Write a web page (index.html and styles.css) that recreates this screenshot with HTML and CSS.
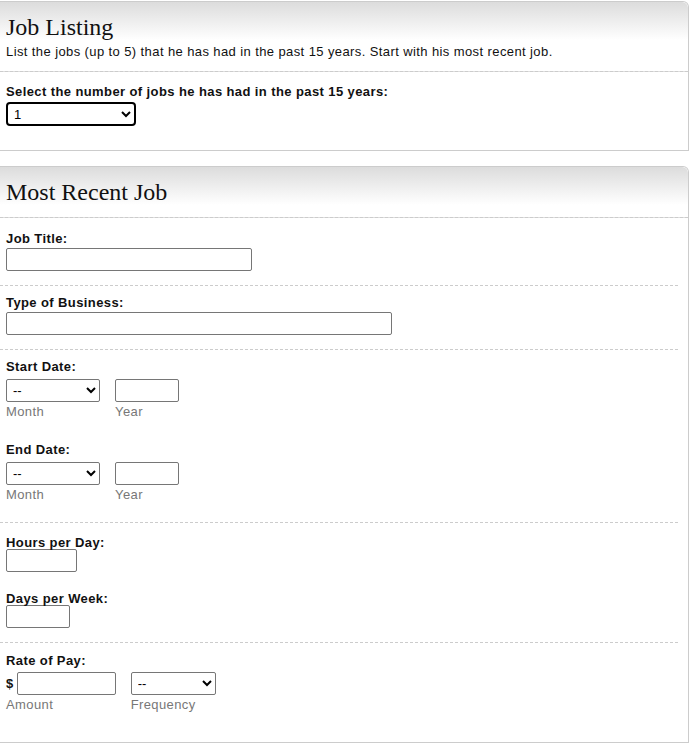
FILE: index.html
```html
<!DOCTYPE html>
<html lang="en">
<head>
    <meta charset="UTF-8">
    <title>Job Listing</title>
    <link rel="stylesheet" href="styles.css">
</head>
<body>
<div class="panel panel-top">
    <div class="panel-head">
        <h2>Job Listing</h2>
        <p>List the jobs (up to 5) that he has had in the past 15 years. Start with his most recent job.</p>
    </div>
    <div class="group group-count">
        <label for="jobCount">Select the number of jobs he has had in the past 15 years:</label>
        <select id="jobCount" class="count-select">
            <option>1</option>
            <option>2</option>
            <option>3</option>
            <option>4</option>
            <option>5</option>
        </select>
    </div>
</div>

<div class="panel">
    <div class="panel-head">
        <h2>Most Recent Job</h2>
    </div>

    <div class="group group-first">
        <label for="jobTitle">Job Title:</label>
        <input type="text" id="jobTitle" class="w-title">
    </div>

    <div class="group">
        <label for="business">Type of Business:</label>
        <input type="text" id="business" class="w-business">
    </div>

    <div class="group">
        <div class="date-field">
            <label for="startMonth">Start Date:</label>
            <div class="split-row">
                <div class="sub-field">
                    <select id="startMonth" class="w-month">
                        <option>--</option>
                        <option>January</option>
                        <option>February</option>
                        <option>March</option>
                        <option>April</option>
                        <option>May</option>
                        <option>June</option>
                        <option>July</option>
                        <option>August</option>
                        <option>September</option>
                        <option>October</option>
                        <option>November</option>
                        <option>December</option>
                    </select>
                    <span class="hint">Month</span>
                </div>
                <div class="sub-field">
                    <input type="text" class="w-year">
                    <span class="hint">Year</span>
                </div>
            </div>
        </div>
        <div class="date-field">
            <label for="endMonth">End Date:</label>
            <div class="split-row">
                <div class="sub-field">
                    <select id="endMonth" class="w-month">
                        <option>--</option>
                        <option>January</option>
                        <option>February</option>
                        <option>March</option>
                        <option>April</option>
                        <option>May</option>
                        <option>June</option>
                        <option>July</option>
                        <option>August</option>
                        <option>September</option>
                        <option>October</option>
                        <option>November</option>
                        <option>December</option>
                    </select>
                    <span class="hint">Month</span>
                </div>
                <div class="sub-field">
                    <input type="text" class="w-year">
                    <span class="hint">Year</span>
                </div>
            </div>
        </div>
    </div>

    <div class="group group-hours">
        <div class="short-field">
            <label for="hours">Hours per Day:</label>
            <input type="text" id="hours" class="w-hours">
        </div>
        <div class="short-field">
            <label for="days">Days per Week:</label>
            <input type="text" id="days" class="w-days">
        </div>
    </div>

    <div class="group group-pay">
        <label for="amount">Rate of Pay:</label>
        <div class="split-row pay-row">
            <div class="sub-field">
                <div class="amount">
                    <span class="dollar">$</span>
                    <input type="text" id="amount" class="w-amount">
                </div>
                <span class="hint">Amount</span>
            </div>
            <div class="sub-field">
                <select class="w-freq">
                    <option>--</option>
                    <option>Hourly</option>
                    <option>Daily</option>
                    <option>Weekly</option>
                    <option>Monthly</option>
                    <option>Yearly</option>
                </select>
                <span class="hint">Frequency</span>
            </div>
        </div>
    </div>
</div>
</body>
</html>
```

FILE: styles.css
```css
* {
    padding: 0;
    margin: 0;
    box-sizing: border-box;
}
body {
    font-family: "Liberation Sans", Arial, sans-serif;
    font-size: 13px;
    letter-spacing: 0.4px;
    color: #111;
    background-color: white;
}
.panel {
    margin: 0 5px 0 0;
    border: 1px solid #ccc;
    border-left: none;
    border-radius: 0 6px 0 0;
    background-color: white;
}
.panel-top {
    margin-top: 1px;
    margin-bottom: 15px;
}
.panel-head {
    padding: 11px 6px 11px;
    border-bottom: 1px dashed #ccc;
    border-radius: 0 6px 0 0;
    background-image: linear-gradient(#dcdcdc, #fff 38px);
}
.panel-head h2 {
    font-family: "Liberation Serif", Georgia, serif;
    font-size: 24px;
    font-weight: normal;
    letter-spacing: normal;
    line-height: 28px;
    color: #111;
}
.panel-head p {
    margin: 3px 0 1px;
    line-height: 15px;
}
.group {
    padding: 9px 0 14px 6px;
    margin-right: 10px;
    border-bottom: 1px dashed #ccc;
}
.group label {
    display: block;
    font-weight: bold;
    line-height: 15px;
    margin-bottom: 2px;
}
.group-first {
    padding-top: 13px;
}
.group-count {
    padding: 12px 0 24px 6px;
    border-bottom: none;
}
.group-count label {
    margin-bottom: 3px;
}
input[type="text"],
select {
    display: block;
    height: 23px;
    font-family: "Liberation Sans", Arial, sans-serif;
    font-size: 13px;
    color: black;
    background-color: white;
    border: 1px solid #767676;
    border-radius: 2px;
}
input[type="text"] {
    padding: 1px 3px;
}
select {
    padding: 0 0 0 2px;
}
.count-select {
    width: 130px;
    height: 24px;
    border: 2px solid black;
    border-radius: 4px;
}
.w-title {
    width: 246px;
}
.w-business {
    width: 386px;
}
.w-month {
    width: 94px;
}
.w-year {
    width: 64px;
}
.w-hours {
    width: 71px;
}
.w-days {
    width: 64px;
}
.w-amount {
    width: 99px;
}
.w-freq {
    width: 85px;
}
.date-field {
    margin-bottom: 6px;
}
.date-field + .date-field {
    margin-top: 23px;
}
.date-field label {
    margin-bottom: 5px;
}
.split-row {
    display: flex;
    gap: 15px;
}
.sub-field {
    display: flex;
    flex-direction: column;
    align-items: flex-start;
}
.hint {
    margin-top: 2px;
    line-height: 15px;
    color: #777;
}
.group-hours {
    padding-top: 13px;
}
.group-hours label {
    line-height: 13px;
    margin-bottom: 0;
}
.short-field + .short-field {
    margin-top: 20px;
}
.group-pay {
    padding: 10px 0 30px 6px;
    border-bottom: none;
}
.group-pay label {
    margin-bottom: 4px;
}
.amount {
    display: flex;
    align-items: center;
    gap: 3px;
}
.dollar {
    font-weight: bold;
}
```
